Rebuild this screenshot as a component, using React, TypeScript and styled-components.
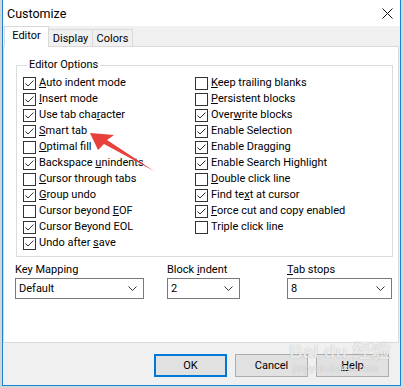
import React from "react";
import styled, { createGlobalStyle, css } from "styled-components";

const GlobalStyle = createGlobalStyle`
  html, body { margin: 0; padding: 0; }
  body {
    background: #d6d6d6;
    font-family: Roboto, "Liberation Sans", sans-serif;
    font-size: 11px;
    color: #000;
  }
  u { text-decoration: underline; text-underline-offset: 1px; }
`;

const Window = styled.div`
  position: relative;
  box-sizing: border-box;
  margin-left: 2px;
  width: 399px;
  height: 386px;
  background: #f0f0f0;
  border: 1px solid #1883d7;
  border-top: none;
  display: flex;
  flex-direction: column;
  overflow: hidden;
`;

const TitleBar = styled.div`
  height: 26px;
  background: #fff;
  display: flex;
  align-items: center;
  justify-content: space-between;
  padding: 0 7px 0 4px;
  flex-shrink: 0;
`;

const Title = styled.div`
  font-size: 12.5px;
  line-height: 18px;
  margin-top: 1px;
`;

const CloseIcon = styled.svg`
  width: 11px;
  height: 11px;
  margin-top: 1px;
`;

const TabStrip = styled.div`
  height: 20px;
  display: flex;
  align-items: flex-end;
  padding-left: 1px;
  flex-shrink: 0;
`;

const Tab = styled.div<{ $active?: boolean; $width: number }>`
  box-sizing: border-box;
  width: ${(p) => p.$width}px;
  flex-shrink: 0;
  border: 1px solid #d9d9d9;
  border-bottom: none;
  display: flex;
  align-items: center;
  justify-content: center;
  line-height: 14px;
  white-space: nowrap;
  ${(p) =>
    p.$active
      ? css`
          height: 21px;
          background: #fff;
          margin-bottom: -1px;
          position: relative;
          z-index: 1;
          padding-bottom: 2px;
        `
      : css`
          height: 17px;
          background: #f0f0f0;
          margin-left: -1px;
          padding-top: 1px;
        `}
`;

const Panel = styled.div`
  box-sizing: border-box;
  height: 297px;
  margin-right: 1px;
  background: #fff;
  border: 1px solid #d9d9d9;
  padding: 10px 5px 0 12px;
  flex-shrink: 0;
`;

const GroupBox = styled.fieldset`
  margin: 0;
  min-width: 0;
  border: 1px solid #dcdcdc;
  padding: 0 0 5px 6px;
`;

const Legend = styled.legend`
  line-height: 16px;
  padding: 0 2px;
  margin-left: 4px;
`;

const OptionGrid = styled.div`
  margin-top: 2px;
  display: grid;
  grid-template-columns: 172px 1fr;
`;

const Column = styled.div`
  display: flex;
  flex-direction: column;
`;

const OptionRow = styled.label`
  height: 16px;
  display: flex;
  align-items: center;
  gap: 3px;
  line-height: 16px;
  white-space: nowrap;
`;

const Box = styled.span`
  box-sizing: border-box;
  width: 13px;
  height: 13px;
  border: 1px solid #333;
  background: #fff;
  display: flex;
  align-items: center;
  justify-content: center;
  flex-shrink: 0;
`;

const FieldRow = styled.div`
  display: flex;
  margin-top: 5px;
  margin-left: -1px;
`;

const Field = styled.div<{ $width: number; $offset?: number }>`
  width: ${(p) => p.$width}px;
  margin-left: ${(p) => p.$offset ?? 0}px;
  display: flex;
  flex-direction: column;
`;

const FieldLabel = styled.div`
  line-height: 15px;
  margin-bottom: 1px;
  white-space: nowrap;
`;

const Combo = styled.div`
  box-sizing: border-box;
  height: 21px;
  border: 1px solid #7a7a7a;
  background: #fff;
  display: flex;
  align-items: center;
  justify-content: space-between;
  padding: 0 6px 0 3px;
  line-height: 16px;
`;

const Chevron = styled.svg`
  width: 9px;
  height: 5px;
`;

const ButtonRow = styled.div`
  display: flex;
  justify-content: flex-end;
  gap: 8px;
  padding: 11px 11px 0 0;
`;

const Button = styled.button<{ $default?: boolean }>`
  box-sizing: border-box;
  width: 73px;
  height: 23px;
  font: inherit;
  line-height: 16px;
  color: #000;
  background: #e1e1e1;
  border: ${(p) => (p.$default ? "2px solid #0078d7" : "1px solid #adadad")};
  padding: 0;
  margin: 0;
`;

const ArrowOverlay = styled.svg`
  position: absolute;
  left: -2px;
  top: 0;
  width: 404px;
  height: 388px;
  pointer-events: none;
`;

const Watermark = styled.div`
  position: absolute;
  left: 286px;
  top: 341px;
  pointer-events: none;
  color: rgba(255, 255, 255, 0.75);
  text-shadow: 0 0 1px rgba(0, 0, 0, 0.3);
  font-family: "Liberation Sans", sans-serif;
  display: flex;
  flex-direction: column;
  align-items: flex-start;
`;

const WatermarkBig = styled.div`
  font-size: 19px;
  font-weight: bold;
  line-height: 22px;
  white-space: nowrap;
  font-family: "Liberation Sans", "Noto Sans CJK SC", sans-serif;
`;

const WatermarkSmall = styled.div`
  font-size: 10px;
  line-height: 12px;
  margin-left: 4px;
  letter-spacing: 0.3px;
`;

type Opt = { label: React.ReactNode; checked: boolean };

const leftOptions: Opt[] = [
  { label: <><u>A</u>uto indent mode</>, checked: true },
  { label: <><u>I</u>nsert mode</>, checked: true },
  { label: <>Use tab cha<u>r</u>acter</>, checked: true },
  { label: <><u>S</u>mart tab</>, checked: true },
  { label: <><u>O</u>ptimal fill</>, checked: false },
  { label: <>Backspace <u>u</u>nindents</>, checked: true },
  { label: <><u>C</u>ursor through tabs</>, checked: false },
  { label: <><u>G</u>roup undo</>, checked: true },
  { label: <>Cursor beyond <u>E</u>OF</>, checked: false },
  { label: <>Cursor Beyond EOL</>, checked: true },
  { label: <>Undo after <u>s</u>ave</>, checked: true },
];

const rightOptions: Opt[] = [
  { label: <><u>K</u>eep trailing blanks</>, checked: false },
  { label: <><u>P</u>ersistent blocks</>, checked: false },
  { label: <>Over<u>w</u>rite blocks</>, checked: true },
  { label: <>Enable Selection</>, checked: true },
  { label: <>Enable Dragging</>, checked: true },
  { label: <>Enable Search Highlight</>, checked: true },
  { label: <><u>D</u>ouble click line</>, checked: false },
  { label: <>Find te<u>x</u>t at cursor</>, checked: true },
  { label: <><u>F</u>orce cut and copy enabled</>, checked: true },
  { label: <>Triple click line</>, checked: false },
];

function Check() {
  return (
    <svg width="11" height="11" viewBox="0 0 11 11">
      <path d="M1.5 5.5 L4 8 L9.5 2.5" fill="none" stroke="#333" strokeWidth="1" />
    </svg>
  );
}

function Option({ opt }: { opt: Opt }) {
  return (
    <OptionRow>
      <Box>{opt.checked && <Check />}</Box>
      <span>{opt.label}</span>
    </OptionRow>
  );
}

function ComboBox({ value }: { value: string }) {
  return (
    <Combo>
      <span>{value}</span>
      <Chevron viewBox="0 0 9 5">
        <path d="M0.5 0.5 L4.5 4.5 L8.5 0.5" fill="none" stroke="#333" strokeWidth="1" />
      </Chevron>
    </Combo>
  );
}

export default function App() {
  return (
    <>
      <GlobalStyle />
      <Window>
        <TitleBar>
          <Title>Customize</Title>
          <CloseIcon viewBox="0 0 11 11">
            <path d="M0.5 0.5 L10.5 10.5 M10.5 0.5 L0.5 10.5" stroke="#111" strokeWidth="1" />
          </CloseIcon>
        </TitleBar>
        <TabStrip>
          <Tab $active $width={45}>Editor</Tab>
          <Tab $width={45}>Display</Tab>
          <Tab $width={41}>Colors</Tab>
        </TabStrip>
        <Panel>
          <GroupBox>
            <Legend>Editor Options</Legend>
            <OptionGrid>
              <Column>
                {leftOptions.map((o, i) => (
                  <Option key={i} opt={o} />
                ))}
              </Column>
              <Column>
                {rightOptions.map((o, i) => (
                  <Option key={i} opt={o} />
                ))}
              </Column>
            </OptionGrid>
          </GroupBox>
          <FieldRow>
            <Field $width={129}>
              <FieldLabel>Key Mapping</FieldLabel>
              <ComboBox value="Default" />
            </Field>
            <Field $width={73} $offset={23}>
              <FieldLabel>Block <u>i</u>ndent</FieldLabel>
              <ComboBox value="2" />
            </Field>
            <Field $width={105} $offset={47}>
              <FieldLabel><u>T</u>ab stops</FieldLabel>
              <ComboBox value="8" />
            </Field>
          </FieldRow>
        </Panel>
        <ButtonRow>
          <Button $default>OK</Button>
          <Button>Cancel</Button>
          <Button><u>H</u>elp</Button>
        </ButtonRow>
        <Watermark>
          <WatermarkBig>Bai du 经验</WatermarkBig>
          <WatermarkSmall>jingyan.baidu.com</WatermarkSmall>
        </Watermark>
        <ArrowOverlay viewBox="0 0 404 388">
          <polygon
            points="89,133 113,135 106,140 153,171 103,144 97,150"
            fill="#e8403a"
          />
        </ArrowOverlay>
      </Window>
    </>
  );
}
